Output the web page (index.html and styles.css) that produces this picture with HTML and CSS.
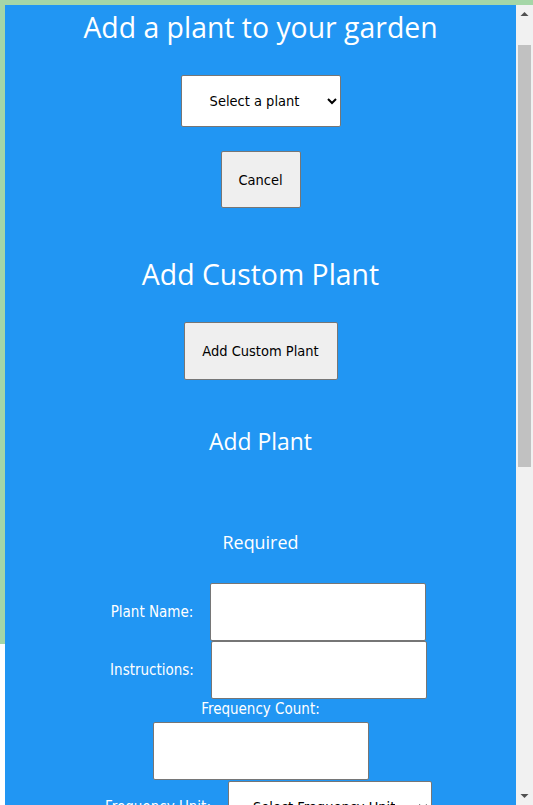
FILE: index.html
```html
<!DOCTYPE html>
<html lang="en">
<head>
<meta charset="utf-8">
<title>Add a plant to your garden</title>
<link rel="stylesheet" href="styles.css">
</head>
<body>
<div class="garden">
  <div class="panel">
    <div class="content">
      <h1 class="title">Add a plant to your garden</h1>
      <select class="picker picker-plant"><option>Select a plant</option></select>
      <button class="btn btn-cancel" type="button">Cancel</button>
      <h2 class="title title-custom">Add Custom Plant</h2>
      <button class="btn btn-custom" type="button">Add Custom Plant</button>
      <h3 class="subtitle">Add Plant</h3>
      <h4 class="section">Required</h4>
      <div class="field-row field-first">
        <label class="field-label" for="plant-name">Plant Name:</label>
        <input class="field-input" id="plant-name" type="text">
      </div>
      <div class="field-row">
        <label class="field-label" for="instructions">Instructions:</label>
        <input class="field-input" id="instructions" type="text">
      </div>
      <div class="field-stack">
        <label class="field-label" for="freq-count">Frequency Count:</label>
        <input class="field-input" id="freq-count" type="number">
      </div>
      <div class="field-row field-unit">
        <label class="field-label" for="freq-unit">Frequency Unit:</label>
        <select class="picker picker-unit" id="freq-unit"><option>Select Frequency Unit</option></select>
      </div>
    </div>
    <div class="scrollbar" aria-hidden="true">
      <div class="scroll-btn">
        <svg width="17" height="17" viewBox="0 0 17 17"><polygon points="4.5,11 8.5,7 12.5,11" fill="#505050"/></svg>
      </div>
      <div class="scroll-track">
        <div class="scroll-thumb"></div>
      </div>
      <div class="scroll-btn">
        <svg width="17" height="17" viewBox="0 0 17 17"><polygon points="4.5,6 8.5,10 12.5,6" fill="#505050"/></svg>
      </div>
    </div>
  </div>
</div>
</body>
</html>
```

FILE: styles.css
```css
html, body {
  margin: 0;
  padding: 0;
  background: #ffffff;
  overflow: hidden;
  height: 100%;
}

.garden {
  box-sizing: border-box;
  height: 80vh;
  padding: 5px 0 0 5px;
  background: #a5d6a7;
}

.panel {
  display: flex;
  height: calc(100vh - 5px);
  background: #2196f3;
  overflow: hidden;
  color: #ffffff;
}

.content {
  flex: 1;
  align-self: flex-start;
  min-width: 0;
  padding-top: 3px;
  display: flex;
  flex-direction: column;
  align-items: center;
  font-family: "DejaVu Sans", sans-serif;
  font-stretch: condensed;
}
.content > * {
  flex-shrink: 0;
}

/* scrollbar look-alike */
.scrollbar {
  flex: 0 0 17px;
  display: flex;
  flex-direction: column;
  background: #f1f1f1;
}
.scroll-btn {
  height: 17px;
  flex: 0 0 17px;
}
.scroll-btn svg {
  display: block;
}
.scroll-track {
  flex: 1;
  padding: 23px 2px 0;
}
.scroll-thumb {
  height: 422px;
  background: #c1c1c1;
}

.title {
  margin: 0;
  font-family: "Open Sans", sans-serif;
  font-stretch: normal;
  font-weight: 400;
  font-size: 28.4px;
  line-height: 38px;
}
.title-custom {
  margin-top: 47px;
}

.subtitle {
  margin: 47px 0 0;
  font-family: "Open Sans", sans-serif;
  font-stretch: normal;
  font-weight: 400;
  font-size: 22.9px;
  line-height: 30px;
}

.section {
  margin: 73px 0 0;
  font-family: "Open Sans", sans-serif;
  font-stretch: normal;
  font-weight: 400;
  font-size: 17.9px;
  line-height: 24px;
}

.picker {
  box-sizing: border-box;
  height: 52px;
  padding: 0 20px;
  border: 1px solid #767676;
  border-radius: 2px;
  background-color: #ffffff;
  color: #000000;
  font-family: "DejaVu Sans", sans-serif;
  font-stretch: condensed;
  font-size: 14.5px;
  text-align-last: center;
}
.picker-plant {
  width: 160px;
  margin-top: 29px;
}
.picker-unit {
  width: 204px;
}

.btn {
  box-sizing: border-box;
  padding: 0 16px;
  border: 1px solid #767676;
  border-radius: 2px;
  background: #efefef;
  color: #000000;
  font-family: "DejaVu Sans", sans-serif;
  font-stretch: condensed;
  font-size: 14.5px;
}
.btn-cancel {
  width: 80px;
  height: 57px;
  margin-top: 24px;
}
.btn-custom {
  width: 154px;
  height: 58px;
  margin-top: 29px;
}

.field-row {
  display: flex;
  align-items: center;
  gap: 17px;
  padding-left: 16px;
}
.field-first {
  margin-top: 29px;
}
.field-unit {
  margin-top: 1px;
}

.field-stack {
  display: flex;
  flex-direction: column;
  align-items: center;
  gap: 2px;
}

.field-label {
  font-size: 15px;
  line-height: 21px;
  color: #ffffff;
}

.field-input {
  box-sizing: border-box;
  width: 216px;
  height: 58px;
  margin: 0;
  border: 1px solid #767676;
  border-radius: 2px;
  background: #ffffff;
}
```
